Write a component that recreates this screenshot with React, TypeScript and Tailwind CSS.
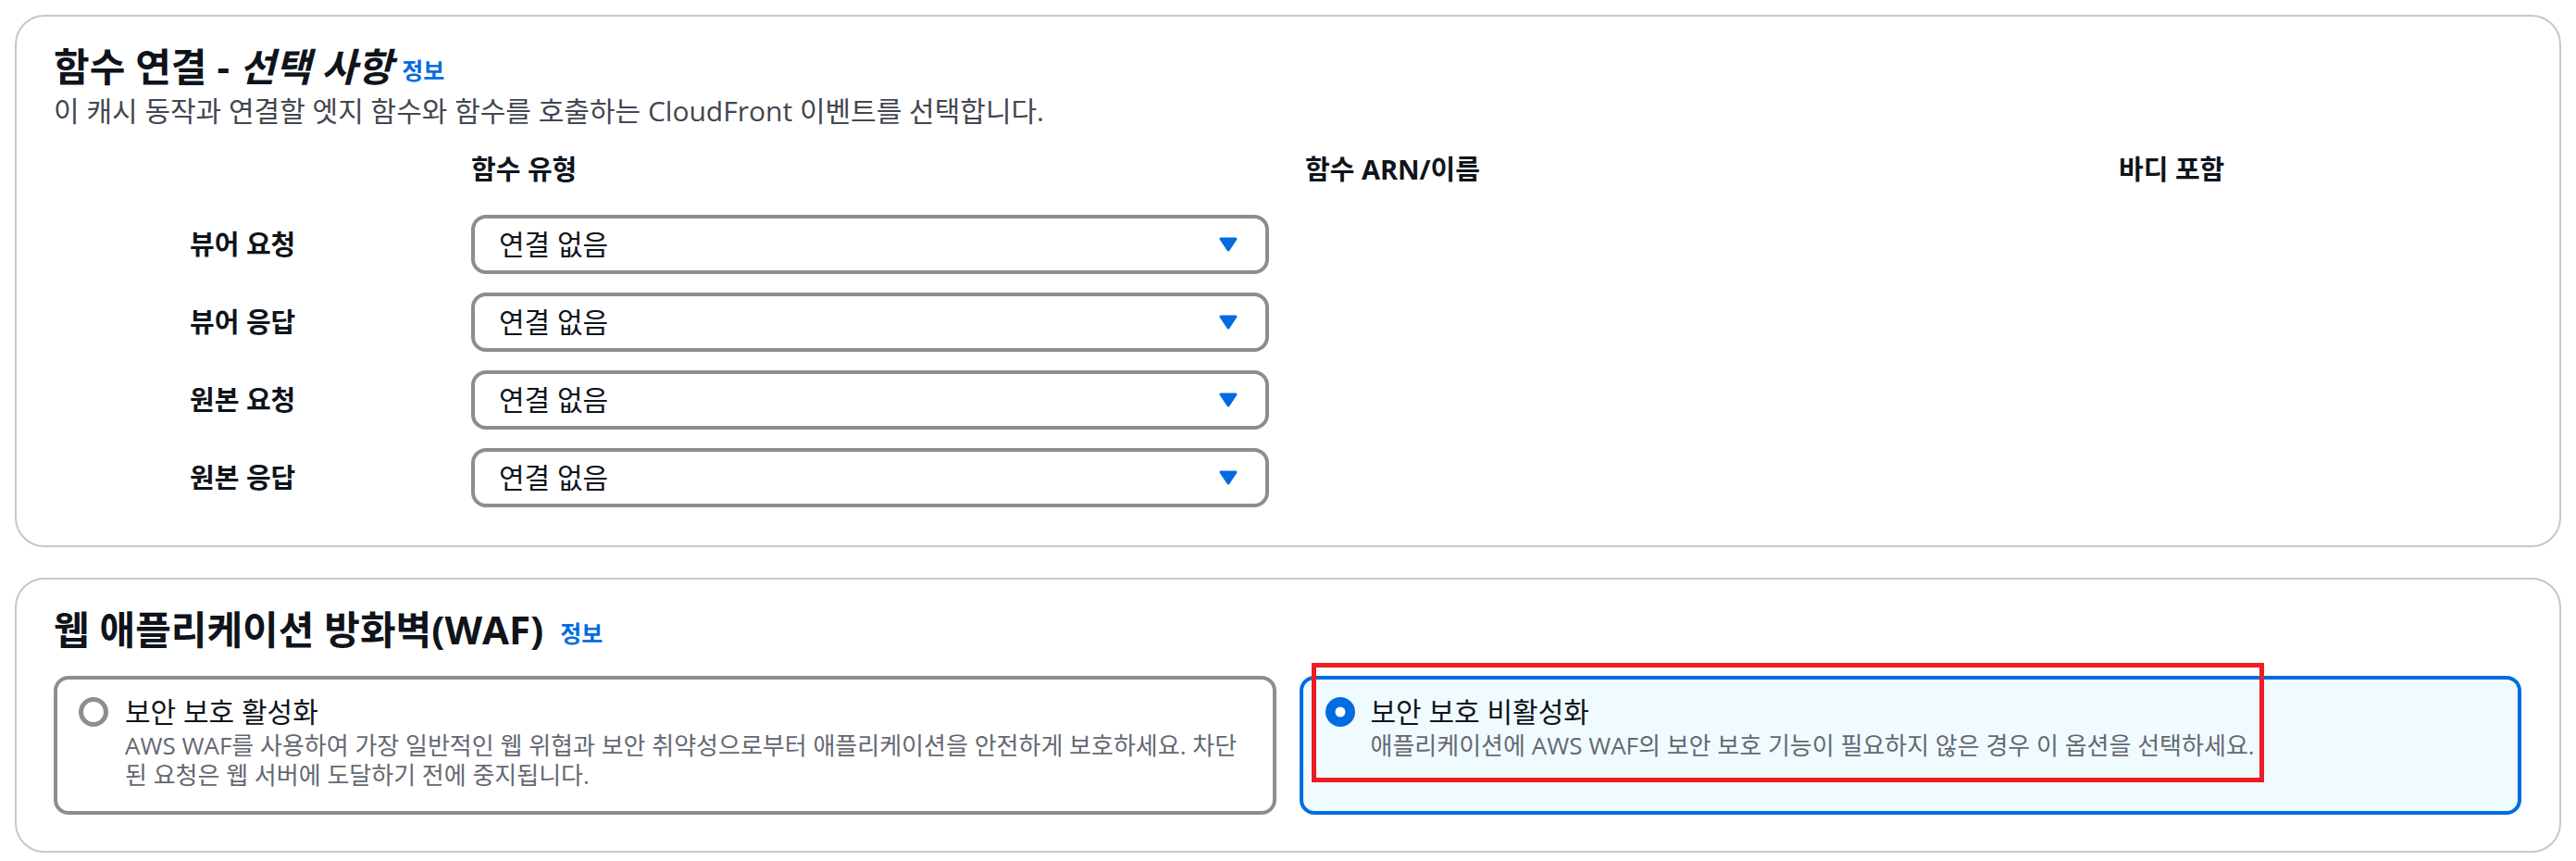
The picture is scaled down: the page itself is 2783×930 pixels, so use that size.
const font = { fontFamily: '"Open Sans", "Noto Sans CJK KR", sans-serif' };

function Caret() {
  return (
    <svg width="20" height="16" viewBox="0 0 20 16" className="shrink-0">
      <path d="M2 2 H18 L10 14 Z" fill="#006ce0" stroke="#006ce0" strokeWidth="3" strokeLinejoin="round" />
    </svg>
  );
}

function Select() {
  return (
    <div className="flex h-[64px] w-[862px] items-center justify-between rounded-[16px] border-[4px] border-[#8c8c94] bg-white pl-[26px] pr-[30px]">
      <span className="text-[30px] leading-[40px] text-[#0f141a]">연결 없음</span>
      <Caret />
    </div>
  );
}

function Radio({ checked }: { checked: boolean }) {
  if (checked) {
    return (
      <svg width="32" height="32" viewBox="0 0 32 32" className="shrink-0">
        <circle cx="16" cy="16" r="16" fill="#006ce0" />
        <circle cx="16" cy="16" r="5.5" fill="#ffffff" />
      </svg>
    );
  }
  return (
    <svg width="32" height="32" viewBox="0 0 32 32" className="shrink-0">
      <circle cx="16" cy="16" r="13.5" fill="#ffffff" stroke="#8c8c94" strokeWidth="5" />
    </svg>
  );
}

export default function App() {
  const rows = ['뷰어 요청', '뷰어 응답', '원본 요청', '원본 응답'];

  return (
    <div className="min-h-[930px] bg-white px-[16px] pt-[16px] text-[#0f141a]" style={font}>
      {/* 함수 연결 */}
      <div className="rounded-[32px] border-2 border-[#c6c6cd] bg-white px-[40px] pb-[41px] pt-[30px]">
        <div className="flex items-end">
          <h2 className="text-[42px] font-bold leading-[48px]">
            함수 연결 - <i>선택 사항</i>
          </h2>
          <a className="mb-[4px] ml-[10px] text-[25px] font-bold leading-[32px] text-[#006ce0]">정보</a>
        </div>
        <p className="mt-[4px] text-[30px] leading-[40px] text-[#424650]">
          이 캐시 동작과 연결할 엣지 함수와 함수를 호출하는 CloudFront 이벤트를 선택합니다.
        </p>

        <div className="mb-[29px] mt-[23px] grid grid-cols-[451px_901px_879px_1fr] text-[29px] font-bold leading-[40px]">
          <div />
          <div>함수 유형</div>
          <div>함수 ARN/이름</div>
          <div>바디 포함</div>
        </div>

        <div className="grid grid-cols-[451px_901px_879px_1fr] items-center gap-y-[20px]">
          {rows.map((r) => (
            <div key={r} className="contents">
              <div className="pl-[147px] text-[29px] font-bold leading-[40px]">{r}</div>
              <Select />
              <div />
              <div />
            </div>
          ))}
        </div>
      </div>

      {/* WAF */}
      <div className="mt-[33px] rounded-[32px] border-2 border-[#c6c6cd] bg-white px-[40px] pb-[39px] pt-[30px]">
        <div className="flex items-end">
          <h2 className="text-[42px] font-bold leading-[48px]">웹 애플리케이션 방화벽(WAF)</h2>
          <a className="mb-[4px] ml-[18px] text-[25px] font-bold leading-[32px] text-[#006ce0]">정보</a>
        </div>

        <div className="mt-[26px] grid w-[2666px] grid-cols-2 gap-[25px]">
          <div className="flex gap-[18px] rounded-[16px] border-[4px] border-[#8c8c94] bg-white pb-[23px] pl-[23px] pr-[28px] pt-[15px]">
            <div className="flex h-[40px] items-center">
              <Radio checked={false} />
            </div>
            <div>
              <div className="text-[30px] leading-[40px] text-[#0f141a]">보안 보호 활성화</div>
              <div className="text-[26px] leading-[32px] text-[#656871]">
                AWS WAF를 사용하여 가장 일반적인 웹 위협과 보안 취약성으로부터 애플리케이션을 안전하게 보호하세요. 차단된 요청은 웹 서버에 도달하기 전에 중지됩니다.
              </div>
            </div>
          </div>

          <div className="relative flex gap-[17px] rounded-[16px] border-[4px] border-[#006ce0] bg-[#f0fbff] pb-[23px] pl-[24px] pr-[28px] pt-[15px]">
            <div className="flex h-[40px] items-center">
              <Radio checked />
            </div>
            <div>
              <div className="text-[30px] leading-[40px] text-[#0f141a]">보안 보호 비활성화</div>
              <div className="text-[26px] leading-[32px] text-[#656871]">
                애플리케이션에 AWS WAF의 보안 보호 기능이 필요하지 않은 경우 이 옵션을 선택하세요.
              </div>
            </div>
            <div className="pointer-events-none absolute left-[9px] top-[-18px] h-[129px] w-[1029px] border-[5px] border-[#ed1c24]" />
          </div>
        </div>
      </div>
    </div>
  );
}
